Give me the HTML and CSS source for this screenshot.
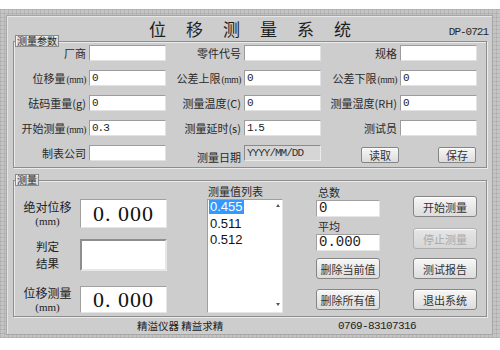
FILE: index.html
```html
<html><head><link rel="stylesheet" href="styles.css"></head><body>
<div class="screen">
  <div class="window">
    <div class="titlebar">
      <span></span>
      <h1 class="title">位移测量系统</h1>
      <span class="code">DP-0721</span>
    </div>

    <div class="group params">
      <span class="group-title">测量参数</span>
      <div class="params-grid">
        <span class="lbl">厂商</span><span class="field"></span>
        <span class="lbl">零件代号</span><span class="field"></span>
        <span class="lbl">规格</span><span class="field"></span>

        <span class="lbl">位移量<small class="unit">(mm)</small></span><span class="field">0</span>
        <span class="lbl">公差上限<small class="unit">(mm)</small></span><span class="field">0</span>
        <span class="lbl">公差下限<small class="unit">(mm)</small></span><span class="field">0</span>

        <span class="lbl">砝码重量(g)</span><span class="field">0</span>
        <span class="lbl">测量温度(C)</span><span class="field">0</span>
        <span class="lbl">测量湿度(RH)</span><span class="field">0</span>

        <span class="lbl">开始测量<small class="unit">(mm)</small></span><span class="field">0.3</span>
        <span class="lbl">测量延时(s)</span><span class="field">1.5</span>
        <span class="lbl">测试员</span><span class="field"></span>

        <span class="lbl">制表公司</span><span class="field"></span>
        <span class="lbl lbl-low">测量日期</span><span class="field field-date">YYYY/MM/DD</span>
        <span class="cell-btn"><button class="btn btn-small">读取</button></span>
        <span class="cell-btn"><button class="btn btn-small">保存</button></span>
      </div>
    </div>

    <div class="group measure">
      <span class="group-title">测量</span>
      <div class="measure-body">
        <div class="col-readouts">
          <div class="readout-row">
            <span class="readout-label"><span class="line">绝对位移</span><span class="line-unit">(mm)</span></span>
            <span class="readout readout-big">0. 000</span>
          </div>
          <div class="readout-row row-judge">
            <span class="readout-label label-judge"><span class="line">判定</span><span class="line">结果</span></span>
            <span class="readout readout-judge"></span>
          </div>
          <div class="readout-row row-shift">
            <span class="readout-label"><span class="line">位移测量</span><span class="line-unit">(mm)</span></span>
            <span class="readout readout-big readout-shift">0. 000</span>
          </div>
        </div>

        <div class="col-list">
          <div class="small-label">测量值列表</div>
          <div class="listbox">
            <div class="list-items">
              <div class="item"><span class="item-selected">0.455</span></div>
              <div class="item">0.511</div>
              <div class="item">0.512</div>
            </div>
            <div class="list-scroll">
              <span class="arrow-up"></span>
              <span class="arrow-down"></span>
            </div>
          </div>
        </div>

        <div class="col-stats">
          <div class="small-label">总数</div>
          <div class="stat">0</div>
          <div class="small-label label-avg">平均</div>
          <div class="stat">0.000</div>
          <button class="btn btn-first">删除当前值</button>
          <button class="btn btn-next">删除所有值</button>
        </div>

        <div class="col-actions">
          <button class="btn">开始测量</button>
          <button class="btn btn-disabled">停止测量</button>
          <button class="btn btn-third">测试报告</button>
          <button class="btn btn-next">退出系统</button>
        </div>
      </div>
    </div>

    <div class="status">
      <span class="motto">精溢仪器 精益求精</span>
      <span class="phone">0769-83107316</span>
    </div>
  </div>
</div>
</body></html>
```

FILE: styles.css
```css
* { box-sizing: border-box; }
body { margin: 0; background: #fff; font-family: "Noto Sans CJK SC", sans-serif; color: #2a2a2a; }

.screen { margin-top: 9px; height: 329px; padding: 6px 7px 3px 6px; background-color: #c4c4c4;
  background-image: linear-gradient(90deg, rgba(0,0,0,.07) 1px, transparent 1px), linear-gradient(rgba(0,0,0,.07) 1px, transparent 1px);
  background-size: 4px 4px; }
.window { height: 320px; background: #cdcdcd; border: 1px solid #a6a6a6; box-shadow: inset 1px 1px 0 #e6e6e6;
  display: flex; flex-direction: column; padding: 0 5px 0 6px; }

.titlebar { height: 25px; display: grid; grid-template-columns: 1fr auto 1fr; align-items: center; }
.title { margin: 0; font-size: 17px; font-weight: normal; line-height: 25px; letter-spacing: 20px; padding-left: 20px; color: #1e1e1e; }
.code { justify-self: end; align-self: end; font: 11px/11px "Liberation Mono", monospace; letter-spacing: -1px; padding-bottom: 3px; margin-right: -1px; }

.group { position: relative; border: 1px solid #8d8d8d; box-shadow: 1px 1px 0 #ebebeb, inset 1px 1px 0 #ebebeb; }
.params { height: 127px; }
.measure { height: 137px; margin-top: 12px; }
.group-title { position: absolute; top: -7px; left: 1px; height: 12px; font-size: 10px; line-height: 10px; padding: 0 1px;
  border: 1px solid #8a8a8a; background: #dadada; box-shadow: inset 1px 1px 0 #f2f2f2; }

/* parameters */
.params-grid { display: grid; grid-template-columns: 74px 77px 78px 77px 79px 77px; grid-auto-rows: 16px; row-gap: 9px; padding: 3px 0 6px 1px; }
.lbl { text-align: right; padding-right: 3px; font-size: 11px; line-height: 16px; white-space: nowrap; }
.lbl-low { padding-top: 4px; }
.unit { font: 9.5px "Liberation Serif", serif; letter-spacing: -0.4px; margin-left: 1px; }
.field { background: #fff; border: 1px solid; border-color: #9c9c9c #e2e2e2 #e2e2e2 #9c9c9c; padding-left: 2px;
  font: 11px/14px "Liberation Mono", monospace; letter-spacing: -1px; color: #222; }
.field-date { background: #d6d6d6; border-color: #8a8a8a #ececec #ececec #8a8a8a; color: #333; }
.cell-btn { display: flex; justify-content: flex-end; padding-right: 1px; padding-top: 2px; }

.btn { display: block; width: 64px; height: 21px; padding: 0; font-family: "Noto Sans CJK SC", sans-serif; font-size: 11px; color: #333;
  border: 1px solid #858585; border-radius: 3px; background: linear-gradient(#f7f7f7, #dcdcdc); box-shadow: inset 0 1px 0 #fff; }
.btn-small { width: 38px; height: 16px; line-height: 12px; font-size: 11px; border-radius: 2px; }
.btn-disabled { color: #a9a9a9; border-color: #b0b0b0; background: linear-gradient(#e6e6e6, #d6d6d6); }
.btn-first { margin-top: 7px; }
.btn-third { margin-top: 9px; }
.btn-next { margin-top: 10px; }

/* measurement */
.measure-body { display: flex; align-items: flex-start; padding-left: 1px; }
.col-readouts { width: 152px; padding-top: 18px; display: flex; flex-direction: column; }
.readout-row { display: flex; align-items: center; }
.row-judge { margin-top: 10px; }
.row-shift { margin-top: 13px; }
.readout-label { width: 65px; display: flex; flex-direction: column; align-items: center; color: #222; }
.readout-label .line { font-size: 12px; line-height: 16px; }
.readout-label .line-unit { font: 11px/13px "Liberation Serif", serif; }
.label-judge .line { font-size: 11.5px; line-height: 17px; }
.readout { width: 87px; background: #fff; border: 1px solid; border-color: #a0a0a0 #e6e6e6 #e6e6e6 #a0a0a0; }
.readout-big { height: 29px; font: 22px/27px "Liberation Serif", serif; text-align: center; color: #111; letter-spacing: 1px; }
.readout-shift { height: 27px; line-height: 25px; }
.readout-judge { height: 32px; border: 2px solid; border-color: #8e8e8e #e8e8e8 #e8e8e8 #8e8e8e; }

.small-label { padding: 4px 0 0 2px; font-size: 11px; line-height: 13px; }
.col-list { margin-left: 40px; width: 76px; }
.col-list .small-label { padding-left: 1px; }
.listbox { margin-top: 1px; height: 114px; display: flex; background: #fff; border: 1px solid; border-color: #9e9e9e #e6e6e6 #e6e6e6 #9e9e9e; }
.list-items { flex: 1; padding: 0 0 0 1px; font: 13px/16px "Liberation Sans", sans-serif; color: #111; }
.item { height: 16px; padding-left: 1px; }
.item-selected { display: inline-block; height: 14px; line-height: 14px; margin-left: -1px; padding: 0 1px; background: #3399ff; color: #fff; }
.list-scroll { width: 8px; display: flex; flex-direction: column; justify-content: space-between; align-items: center; padding: 4px 0 6px; }
.arrow-up { border-left: 2px solid transparent; border-right: 2px solid transparent; border-bottom: 3px solid #555; }
.arrow-down { border-left: 2px solid transparent; border-right: 2px solid transparent; border-top: 3px solid #555; }

.col-stats { margin-left: 33px; width: 64px; }
.col-stats .small-label { line-height: 14px; }
.col-stats .label-avg { padding-top: 2px; }
.stat { margin-top: 1px; height: 17px; background: #fff; border: 1px solid; border-color: #a0a0a0 #e6e6e6 #e6e6e6 #a0a0a0;
  padding-left: 2px; font: 14px/15px "Liberation Mono", monospace; color: #222; }

.col-actions { margin-left: 33px; width: 64px; padding-top: 15px; }
.col-actions .btn-disabled { margin-top: 11px; }

.status { height: 17px; display: flex; padding-top: 3px; font-size: 10.5px; line-height: 12px; color: #222; }
.motto { margin-left: 124px; width: 201px; }
.phone { font: 11px/12px "Liberation Mono", monospace; letter-spacing: -0.6px; }
```
